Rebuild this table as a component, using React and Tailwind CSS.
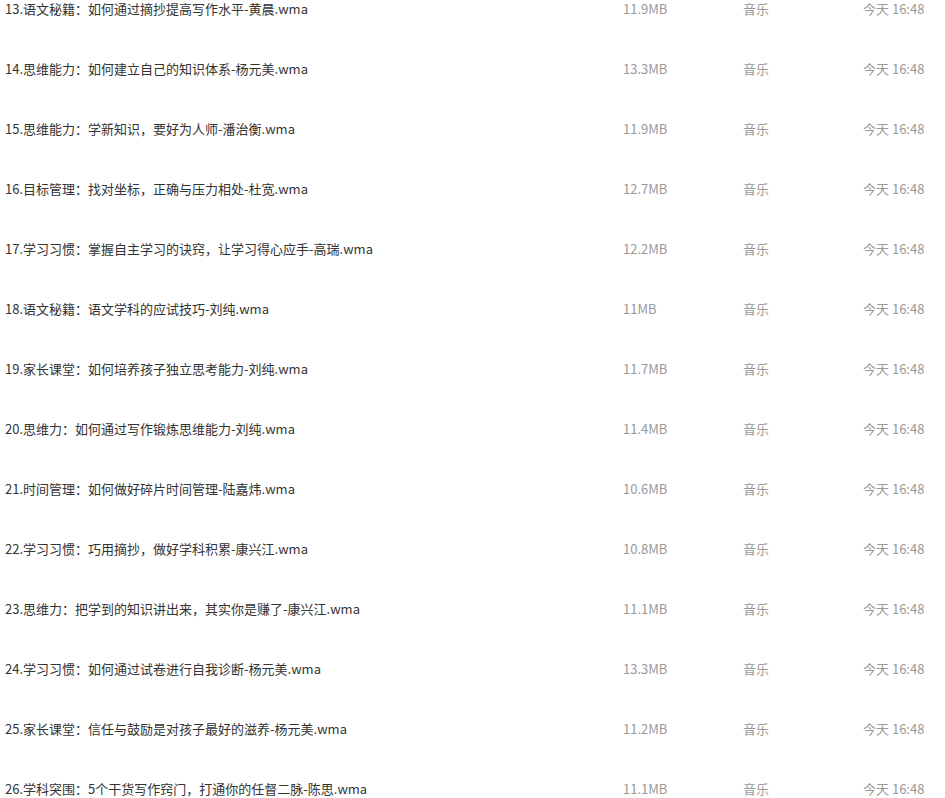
import React from 'react'

const files = [
  { name: '13.语文秘籍：如何通过摘抄提高写作水平-黄晨.wma', size: '11.9MB' },
  { name: '14.思维能力：如何建立自己的知识体系-杨元美.wma', size: '13.3MB' },
  { name: '15.思维能力：学新知识，要好为人师-潘治衡.wma', size: '11.9MB' },
  { name: '16.目标管理：找对坐标，正确与压力相处-杜宽.wma', size: '12.7MB' },
  { name: '17.学习习惯：掌握自主学习的诀窍，让学习得心应手-高瑞.wma', size: '12.2MB' },
  { name: '18.语文秘籍：语文学科的应试技巧-刘纯.wma', size: '11MB' },
  { name: '19.家长课堂：如何培养孩子独立思考能力-刘纯.wma', size: '11.7MB' },
  { name: '20.思维力：如何通过写作锻炼思维能力-刘纯.wma', size: '11.4MB' },
  { name: '21.时间管理：如何做好碎片时间管理-陆嘉炜.wma', size: '10.6MB' },
  { name: '22.学习习惯：巧用摘抄，做好学科积累-康兴江.wma', size: '10.8MB' },
  { name: '23.思维力：把学到的知识讲出来，其实你是赚了-康兴江.wma', size: '11.1MB' },
  { name: '24.学习习惯：如何通过试卷进行自我诊断-杨元美.wma', size: '13.3MB' },
  { name: '25.家长课堂：信任与鼓励是对孩子最好的滋养-杨元美.wma', size: '11.2MB' },
  { name: '26.学科突围：5个干货写作窍门，打通你的任督二脉-陈思.wma', size: '11.1MB' },
]

export default function App() {
  return (
    <div
      className="w-[945px] h-[798px] overflow-hidden bg-white text-[13px]"
      style={{ fontFamily: '"Noto Sans CJK SC", "Noto Sans", sans-serif' }}
    >
      <div className="-mt-[21px]">
        {files.map((f) => (
          <div key={f.name} className="flex items-center h-[60px] pl-[5px]">
            <div className="w-[618px] text-[#333333] whitespace-nowrap">{f.name}</div>
            <div className="w-[120px] text-[#999999]">{f.size}</div>
            <div className="w-[120px] text-[#999999]">音乐</div>
            <div className="text-[#999999]">今天 16:48</div>
          </div>
        ))}
      </div>
    </div>
  )
}
